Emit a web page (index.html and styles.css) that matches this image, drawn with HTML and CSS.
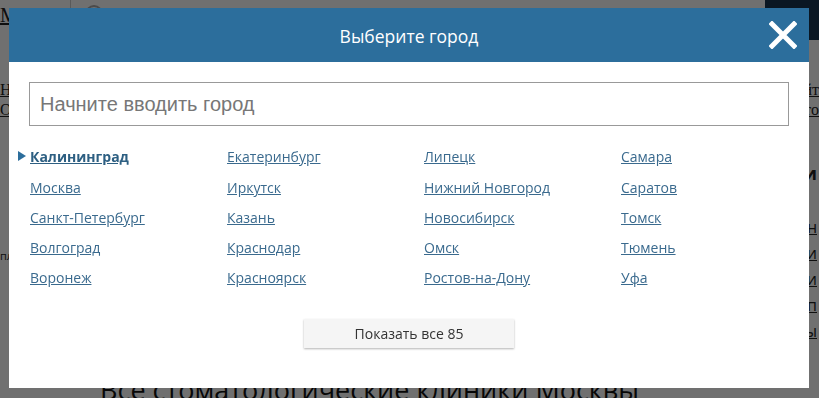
FILE: index.html
```html
<!DOCTYPE html>
<html lang="ru">
<head>
    <meta charset="UTF-8">
    <meta name="viewport" content="width=device-width, initial-scale=1.0">
    <title>Выберите город</title>
    <link rel="stylesheet" href="styles.css">
</head>
<body>
    <div class="page">
        <div class="topbar">
            <a href="#" class="top-city">Мо</a>
            <span class="divider"></span>
            <span class="search-icon"></span>
            <span class="top-button">Найти</span>
        </div>
        <div class="page-row">
            <div class="side-links">
                <a href="#">На</a>
                <a href="#">О</a>
            </div>
            <div class="side-links right">
                <a href="#">йт</a>
                <a href="#">то</a>
            </div>
        </div>
        <div class="page-mid">
            <div class="left-note">пл</div>
            <div class="right-list">
                <b>и</b>
                <a href="#">н</a>
                <a href="#">и</a>
                <a href="#">и</a>
                <a href="#">п</a>
                <a href="#">ы</a>
            </div>
        </div>
        <h2 class="page-title">Все стоматологические клиники Москвы</h2>
    </div>

    <div class="overlay"></div>

    <div class="modal">
        <div class="modal-header">
            <h1>Выберите город</h1>
            <a href="#" class="close">
                <svg width="28" height="28" viewBox="0 0 28 28">
                    <path d="M3 3 L25 25 M25 3 L3 25" stroke="#fff" stroke-width="5" stroke-linecap="square"/>
                </svg>
            </a>
        </div>
        <div class="modal-body">
            <input type="text" class="city-input" placeholder="Начните вводить город">
            <div class="cities">
                <ul>
                    <li><a href="#" class="current">Калининград</a></li>
                    <li><a href="#">Москва</a></li>
                    <li><a href="#">Санкт-Петербург</a></li>
                    <li><a href="#">Волгоград</a></li>
                    <li><a href="#">Воронеж</a></li>
                </ul>
                <ul>
                    <li><a href="#">Екатеринбург</a></li>
                    <li><a href="#">Иркутск</a></li>
                    <li><a href="#">Казань</a></li>
                    <li><a href="#">Краснодар</a></li>
                    <li><a href="#">Красноярск</a></li>
                </ul>
                <ul>
                    <li><a href="#">Липецк</a></li>
                    <li><a href="#">Нижний Новгород</a></li>
                    <li><a href="#">Новосибирск</a></li>
                    <li><a href="#">Омск</a></li>
                    <li><a href="#">Ростов-на-Дону</a></li>
                </ul>
                <ul>
                    <li><a href="#">Самара</a></li>
                    <li><a href="#">Саратов</a></li>
                    <li><a href="#">Томск</a></li>
                    <li><a href="#">Тюмень</a></li>
                    <li><a href="#">Уфа</a></li>
                </ul>
            </div>
            <div class="more">
                <button class="more-button">Показать все 85</button>
            </div>
        </div>
    </div>
</body>
</html>
```

FILE: styles.css
```css
body {
    margin: 0;
    height: 398px;
    overflow: hidden;
    font-family: 'Open Sans', sans-serif;
    background: #fff;
}
.page {
    color: #222;
}
.topbar {
    display: flex;
    align-items: flex-start;
    height: 40px;
}
.top-city {
    color: #222;
    font-family: 'Liberation Serif', serif;
    font-size: 20px;
    margin-top: 4px;
    width: 70px;
}
.divider {
    width: 1px;
    height: 40px;
    background: #ccc;
}
.search-icon {
    width: 14px;
    height: 14px;
    border: 2px solid #aaa;
    border-radius: 50%;
    margin: 5px 0 0 14px;
}
.top-button {
    margin-left: auto;
    width: 54px;
    height: 40px;
    background: #173650;
    color: #fff;
    font-size: 14px;
    padding-top: 14px;
    box-sizing: border-box;
}
.page-row {
    display: flex;
    justify-content: space-between;
    margin-top: 40px;
}
.side-links {
    display: flex;
    flex-direction: column;
    font-family: 'Liberation Serif', serif;
    font-size: 16px;
    line-height: 20px;
}
.side-links.right {
    align-items: flex-end;
}
.side-links a {
    color: #222;
}
.page-mid {
    display: flex;
    justify-content: space-between;
    margin-top: 40px;
}
.left-note {
    font-size: 11px;
    margin-top: 88px;
}
.right-list {
    display: flex;
    flex-direction: column;
    align-items: flex-end;
    font-size: 16px;
    line-height: 26px;
    padding-right: 2px;
}
.right-list b {
    margin-bottom: 28px;
    font-size: 18px;
}
.right-list a {
    color: #222;
    line-height: 26px;
}
.page-title {
    position: absolute;
    left: 100px;
    top: 371px;
    margin: 0;
    font-size: 27px;
    font-weight: normal;
    color: #111;
}
.overlay {
    position: fixed;
    inset: 0;
    background: rgba(0, 0, 0, 0.56);
}
.modal {
    position: absolute;
    left: 9px;
    top: 8px;
    width: 800px;
    height: 380px;
    background: #fff;
}
.modal-header {
    display: flex;
    align-items: center;
    justify-content: center;
    height: 54px;
    background: #2c6e9c;
    position: relative;
}
.modal-header h1 {
    margin: 0;
    color: #fff;
    font-size: 17.5px;
    font-weight: normal;
    padding-top: 2px;
}
.close {
    position: absolute;
    right: 12px;
    top: 13px;
    display: block;
    width: 28px;
    height: 28px;
}
.modal-body {
    padding: 20px 20px 0 20px;
}
.city-input {
    display: block;
    width: 100%;
    height: 44px;
    box-sizing: border-box;
    border: 1px solid #999;
    padding: 0 10px;
    font-family: 'Liberation Sans', Arial, sans-serif;
    font-size: 20px;
    color: #333;
    outline: none;
}
.city-input::placeholder {
    color: #777;
}
.cities {
    display: grid;
    grid-template-columns: repeat(4, 197px);
    margin-top: 16px;
    padding-left: 1px;
}
.cities ul {
    list-style: none;
    margin: 0;
    padding: 0;
}
.cities li {
    height: 30px;
    line-height: 30px;
    font-size: 14px;
}
.cities li:first-child {
    height: 31px;
}
.cities a {
    color: #3a6a8e;
}
.cities a.current {
    font-weight: bold;
    color: #2d5f82;
}
.cities a.current::before {
    content: "";
    display: inline-block;
    width: 0;
    height: 0;
    border-left: 8px solid #2c6e9c;
    border-top: 5px solid transparent;
    border-bottom: 5px solid transparent;
    margin-left: -12px;
    margin-right: 4px;
    vertical-align: 1px;
}
.more {
    display: flex;
    justify-content: center;
    margin-top: 26px;
}
.more-button {
    width: 210px;
    height: 29px;
    border: none;
    background: #f5f5f5;
    box-shadow: 0 1px 2px rgba(0, 0, 0, 0.3);
    font-family: 'Open Sans', sans-serif;
    font-size: 14px;
    color: #333;
    cursor: pointer;
}
```
